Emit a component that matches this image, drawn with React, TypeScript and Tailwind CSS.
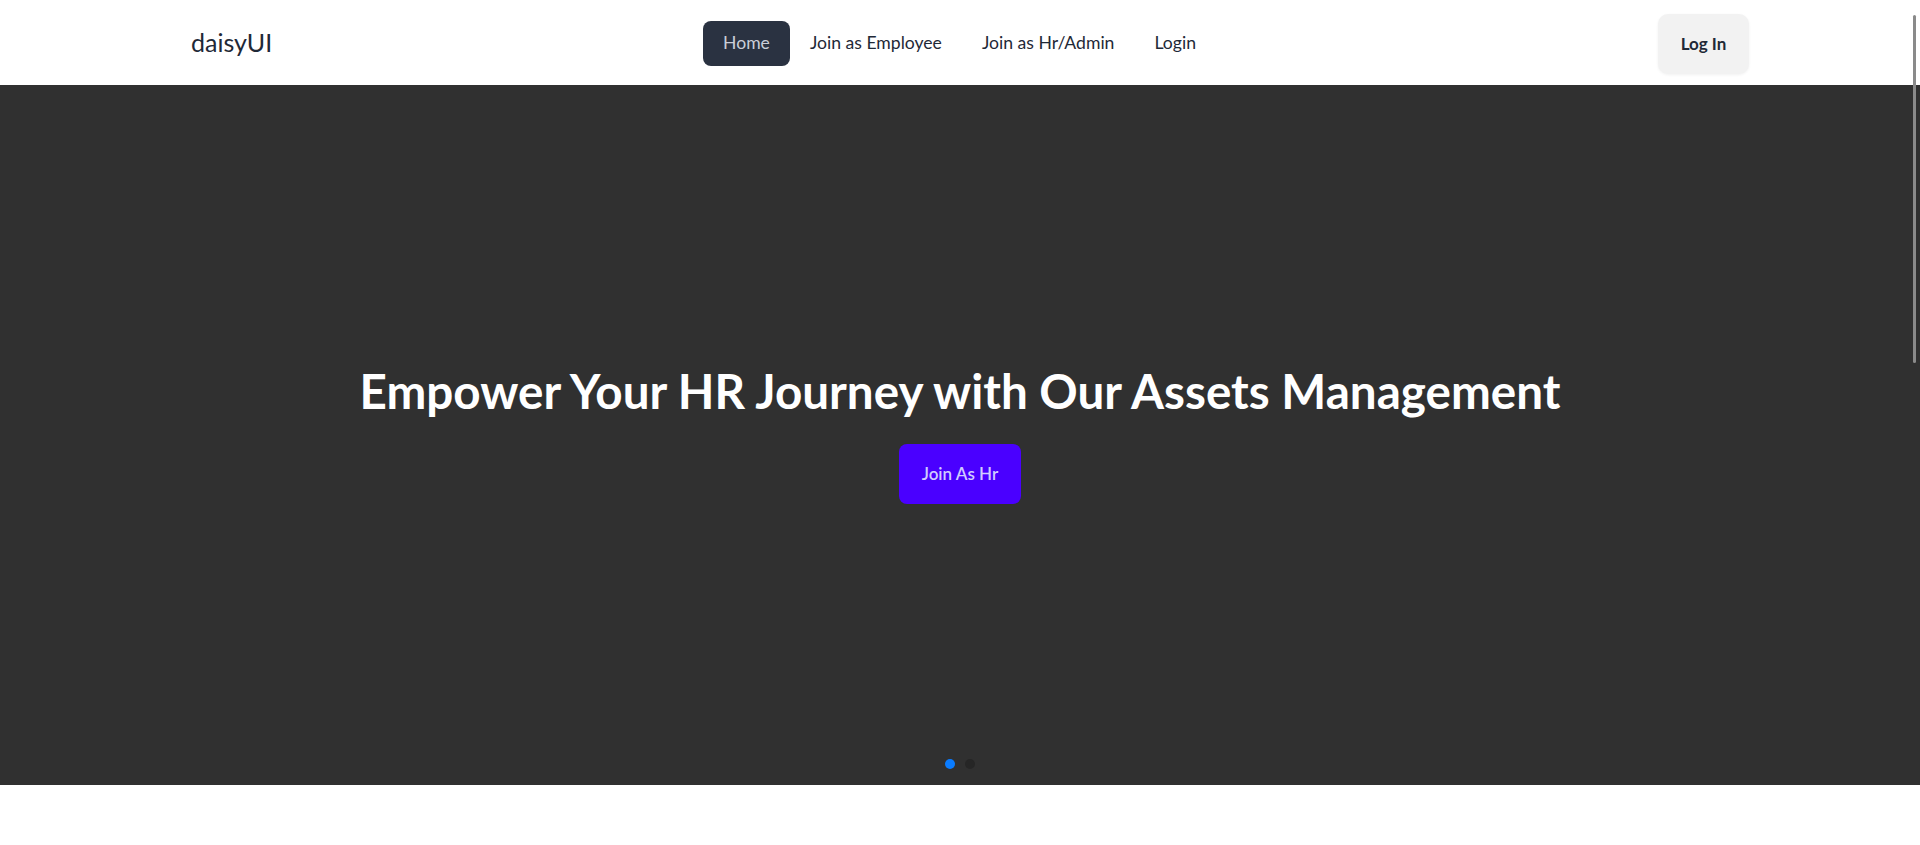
import { useState } from 'react'

const links = ['Home', 'Join as Employee', 'Join as Hr/Admin', 'Login']

export default function App() {
  const [active, setActive] = useState(0)
  const [slide, setSlide] = useState(0)

  return (
    <div className="relative min-h-[845px] bg-white font-['Lato','Noto_Sans',sans-serif] text-[#1f2937]">
      {/* Navbar */}
      <nav className="flex h-[85px] items-center pl-[191px] pr-[171px] pt-[2px]">
        <div className="w-[512px] shrink-0">
          <a href="#" className="text-[25px] leading-none text-[#1f2937]">
            daisyUI
          </a>
        </div>
        <ul className="flex items-center">
          {links.map((link, i) => (
            <li key={link}>
              <button
                type="button"
                onClick={() => setActive(i)}
                className={
                  i === active
                    ? 'flex h-[45px] items-center rounded-lg bg-[#2a3241] px-5 text-[17.6px] text-[#c9ced8]'
                    : 'flex h-[45px] items-center rounded-lg px-5 text-[17.6px] text-[#1f2937]'
                }
              >
                {link}
              </button>
            </li>
          ))}
        </ul>
        <div className="flex flex-1 justify-end">
          <button
            type="button"
            className="h-[60px] w-[91px] rounded-[10px] bg-[#f2f2f2] text-[17px] font-bold text-[#1f2937] shadow-[0_1px_3px_rgba(0,0,0,0.06)]"
          >
            Log In
          </button>
        </div>
      </nav>

      {/* Hero carousel */}
      <section className="relative flex h-[700px] flex-col items-center justify-center bg-[#303030]">
        <h1 className="text-[47.6px] font-bold leading-[48px] text-white">
          Empower Your HR Journey with Our Assets Management
        </h1>
        <button
          type="button"
          className="mt-[29px] h-[60px] w-[122px] rounded-lg bg-[#4a00ff] text-[17px] font-semibold text-[#d0ccff]"
        >
          Join As Hr
        </button>
        <div className="absolute bottom-[16px] left-0 right-0 flex justify-center gap-[10px]">
          {[0, 1].map((d) => (
            <button
              key={d}
              type="button"
              onClick={() => setSlide(d)}
              className={
                d === slide
                  ? 'h-[10px] w-[10px] rounded-full bg-[#0a7cff]'
                  : 'h-[10px] w-[10px] rounded-full bg-[#262626]'
              }
            />
          ))}
        </div>
      </section>

      {/* overlay scrollbar */}
      <div className="pointer-events-none absolute right-[4px] top-[15px] h-[348px] w-[3px] rounded-full bg-[#8a8a8a]" />
    </div>
  )
}
